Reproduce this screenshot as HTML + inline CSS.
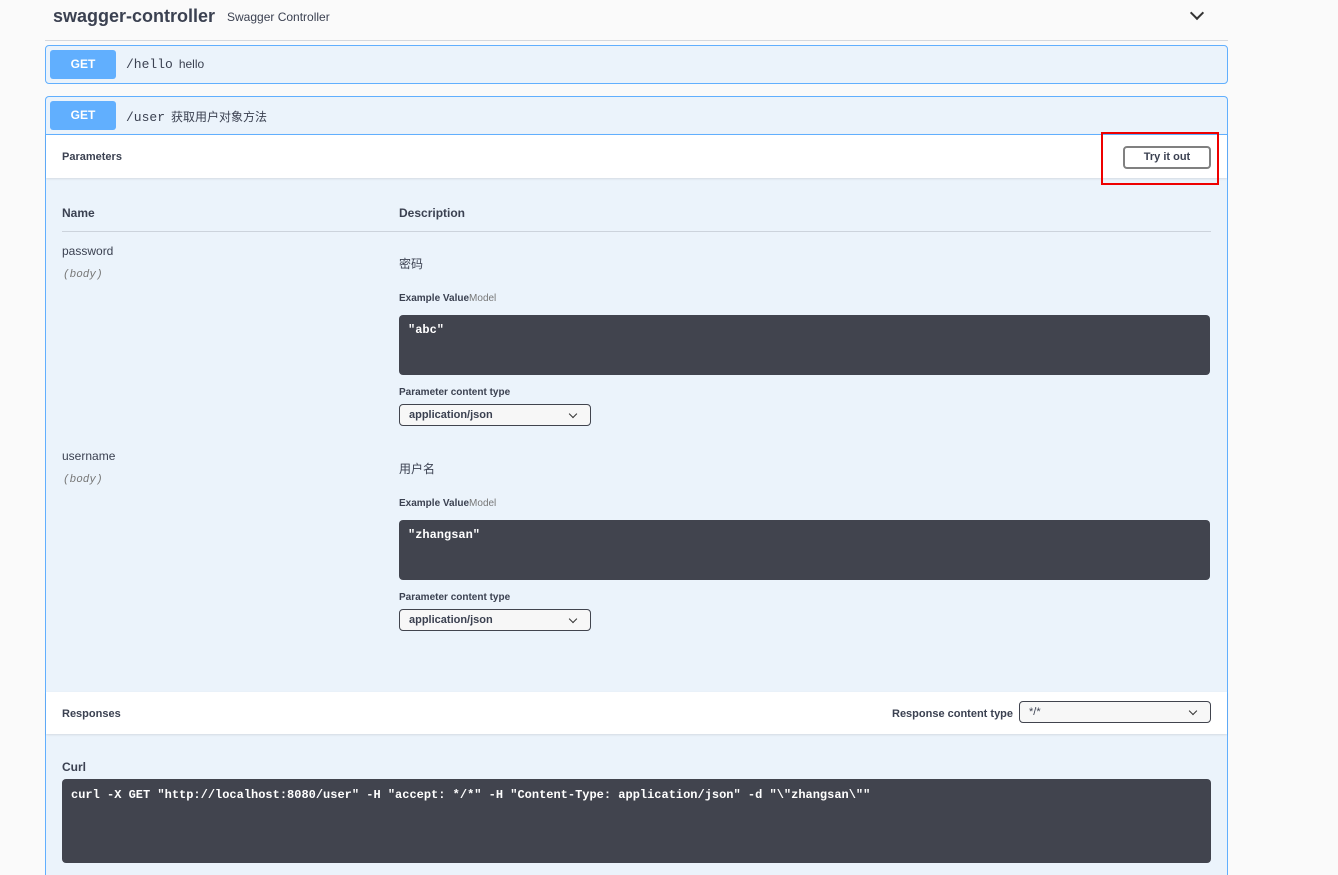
<!DOCTYPE html>
<html style="overflow:hidden;height:875px"><head><meta charset="utf-8"><style>
*{margin:0;padding:0;box-sizing:border-box}
body{width:1338px;height:875px;background:#fafafa;font-family:"Liberation Sans","Noto Sans CJK SC",sans-serif;color:#3b4151;position:relative;overflow:hidden}
.a{position:absolute}
.blk{position:absolute;left:45px;width:1183px;border:1px solid #61affe;border-radius:4px;background:#ebf3fb}
.get{position:absolute;left:4px;width:66px;height:29px;background:#61affe;border-radius:3px;color:#fff;font-weight:bold;font-size:12px;text-align:center;line-height:29px}
.path{position:absolute;left:80px;font-family:"Liberation Mono",monospace;font-size:13px;color:#3b4151}
.path span{font-family:"Liberation Sans","Noto Sans CJK SC",sans-serif;font-size:12px;margin-left:6px}
.b{font-weight:bold;font-size:12px}
.code{position:absolute;background:#41444e;border-radius:4px;color:#fff;font-family:"Liberation Mono",monospace;font-weight:bold;font-size:12px;padding:8px 9px}
.sel{position:absolute;border:1px solid #41444e;border-radius:4px;background:#f7f7f7;font-size:11px;font-weight:bold;padding:4px 9px;height:22px}
.sel:after{content:"";position:absolute;right:14px;top:6px;width:5px;height:5px;border-right:1.5px solid #333;border-bottom:1.5px solid #333;transform:rotate(45deg)}
</style></head><body>
<div class="a" style="left:53px;top:6px;font-size:18px;font-weight:bold">swagger-controller</div>
<div class="a" style="left:227px;top:10px;font-size:12px">Swagger Controller</div>
<div class="a" style="left:1192px;top:8px;width:10px;height:10px;border-right:2px solid #333;border-bottom:2px solid #333;transform:rotate(45deg)"></div>
<div class="a" style="left:45px;top:40px;width:1183px;height:1px;background:#d4d8de"></div>

<div class="blk" style="top:45px;height:39px">
<div class="get" style="top:4px">GET</div>
<div class="path" style="top:11px">/hello<span>hello</span></div>
</div>

<div class="blk" style="top:96px;height:779px;border-bottom:none;border-radius:4px 4px 0 0">
<div class="get" style="top:4px">GET</div>
<div class="path" style="top:11px">/user<span>获取用户对象方法</span></div>
<div class="a" style="left:0;top:37px;width:1181px;height:44px;background:#fff;border-top:1px solid #61affe;box-shadow:0 1px 2px rgba(0,0,0,.1)"></div>
<div class="a b" style="left:16px;top:54px;font-size:11px">Parameters</div>
<div class="a" style="left:1077px;top:49px;width:88px;height:23px;border:2px solid #808080;border-radius:4px;background:#fff;font-size:11px;font-weight:bold;text-align:center;line-height:19px">Try it out</div>
<div class="a" style="left:1055px;top:35px;width:118px;height:53px;border:2px solid #e00"></div>

<div class="a b" style="left:16px;top:109px">Name</div>
<div class="a b" style="left:353px;top:109px">Description</div>
<div class="a" style="left:16px;top:134px;width:1149px;height:1px;background:#ccd3dc"></div>

<div class="a" style="left:16px;top:147px;font-size:12px">password</div>
<div class="a" style="left:17px;top:172px;font-size:11px;font-style:italic;color:#777;font-family:'Liberation Mono',monospace">(body)</div>
<div class="a" style="left:353px;top:158px;font-size:12px">密码</div>
<div class="a" style="left:353px;top:196px;font-size:10px"><b>Example Value</b><span style="color:#777">Model</span></div>
<div class="code" style="left:353px;top:218px;width:811px;height:60px">"abc"</div>
<div class="a b" style="left:353px;top:290px;font-size:10px">Parameter content type</div>
<div class="sel" style="left:353px;top:307px;width:192px">application/json</div>

<div class="a" style="left:16px;top:352px;font-size:12px">username</div>
<div class="a" style="left:17px;top:377px;font-size:11px;font-style:italic;color:#777;font-family:'Liberation Mono',monospace">(body)</div>
<div class="a" style="left:353px;top:363px;font-size:12px">用户名</div>
<div class="a" style="left:353px;top:401px;font-size:10px"><b>Example Value</b><span style="color:#777">Model</span></div>
<div class="code" style="left:353px;top:423px;width:811px;height:60px">"zhangsan"</div>
<div class="a b" style="left:353px;top:495px;font-size:10px">Parameter content type</div>
<div class="sel" style="left:353px;top:512px;width:192px">application/json</div>

<div class="a" style="left:0;top:595px;width:1181px;height:42px;background:#fff;box-shadow:0 1px 2px rgba(0,0,0,.1)"></div>
<div class="a b" style="left:16px;top:611px;font-size:11px">Responses</div>
<div class="a b" style="left:846px;top:611px;font-size:11px">Response content type</div>
<div class="sel" style="left:973px;top:604px;width:192px;font-weight:normal">*/*</div>

<div class="a b" style="left:16px;top:663px">Curl</div>
<div class="code" style="left:16px;top:682px;width:1149px;height:84px;padding:9px 9px">curl -X GET "http://localhost:8080/user" -H "accept: */*" -H "Content-Type: application/json" -d "\"zhangsan\""</div>
</div>
</body></html>
